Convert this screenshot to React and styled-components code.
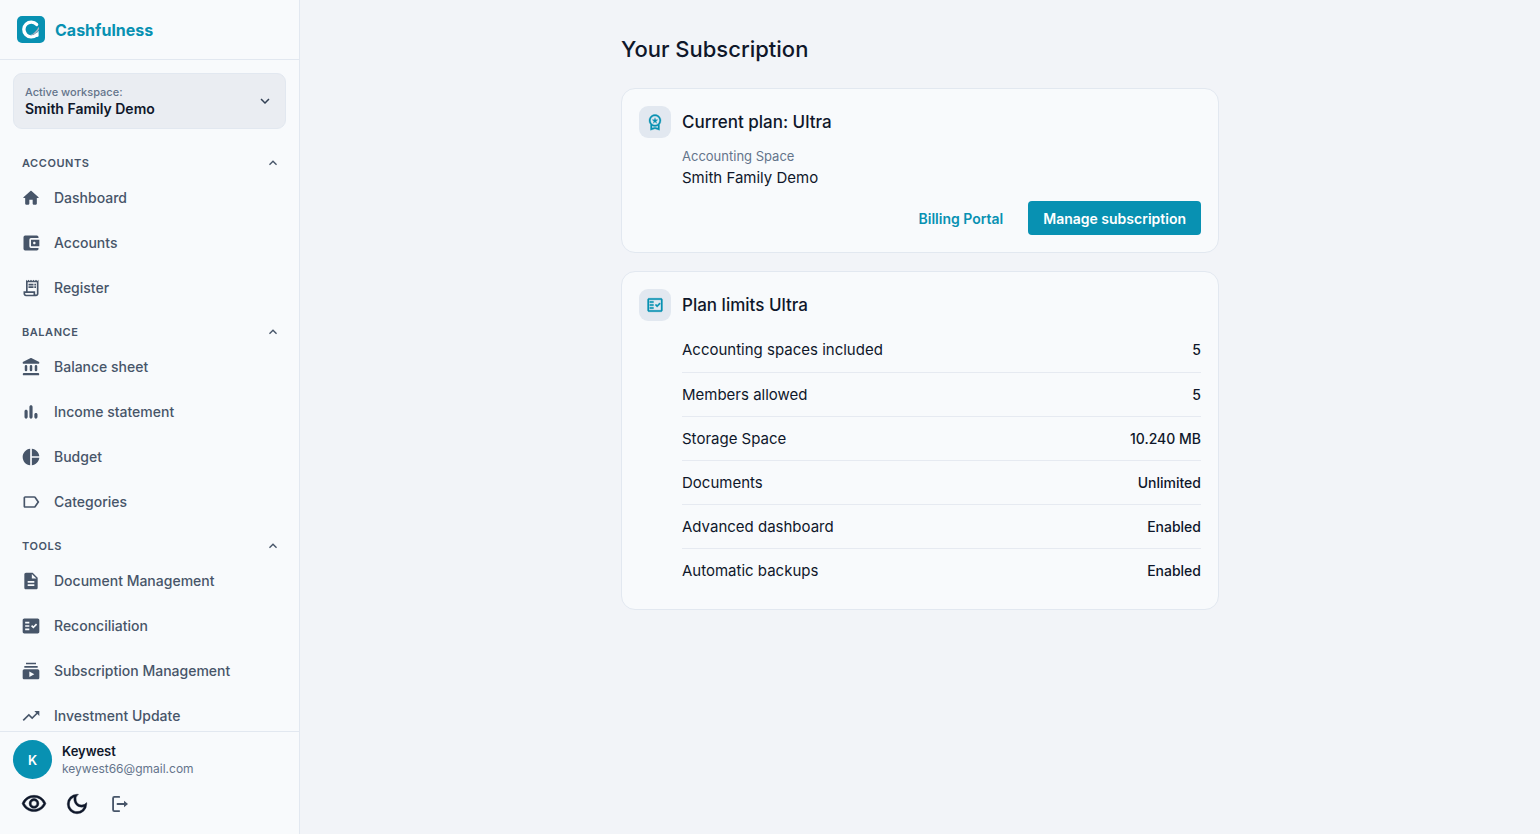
import styled, { createGlobalStyle } from "styled-components";
import { useState } from "react";
import {
  MdAccountBalanceWallet,
  MdOutlineReceiptLong,
  MdPieChart,
  MdLabelOutline,
  MdDescription,
  MdFactCheck,
  MdSubscriptions,
  MdTrendingUp,
  MdExpandMore,
  MdExpandLess,
  MdOutlineVisibility,
  MdOutlineDarkMode,
  MdOutlineWorkspacePremium,
  MdOutlineFactCheck,
} from "react-icons/md";

const GlobalStyle = createGlobalStyle`
  * {
    box-sizing: border-box;
  }

  body {
    margin: 0;
    background-color: #f2f4f8;
    color: #0f172a;
    font-family: Inter, "Liberation Sans", sans-serif;
    font-size: 15px;
  }

  button {
    font-family: inherit;
    cursor: pointer;
  }
`;

const Layout = styled.div`
  display: flex;
  height: 100vh;
`;

const Sidebar = styled.aside`
  display: flex;
  flex-direction: column;
  flex: 0 0 300px;
  background-color: #f8fafc;
  border-right: 1px solid #e2e8f0;
`;

const Brand = styled.a`
  display: flex;
  align-items: center;
  gap: 10px;
  flex-shrink: 0;
  height: 60px;
  padding: 0 17px;
  border-bottom: 1px solid #e2e8f0;
  color: #0891b2;
  font-size: 16px;
  font-weight: 700;
  text-decoration: none;
`;

const Workspace = styled.button`
  display: flex;
  justify-content: space-between;
  align-items: center;
  flex-shrink: 0;
  height: 56px;
  margin: 13px;
  padding: 0 11px;
  background-color: #eaedf2;
  border: 1px solid #e2e8f0;
  border-radius: 9px;
  color: #334155;
  text-align: left;
`;

const WorkspaceLabel = styled.span`
  display: block;
  color: #64748b;
  font-size: 11px;
  font-weight: 500;
  line-height: 16px;
`;

const WorkspaceName = styled.span`
  display: block;
  color: #0f172a;
  font-size: 14px;
  font-weight: 600;
  line-height: 18px;
`;

const Nav = styled.nav`
  flex: 1;
  min-height: 0;
  padding-top: 8px;
  overflow-y: auto;
  scrollbar-width: none;
`;

const Group = styled.section`
  margin-bottom: 9px;
`;

const GroupTitle = styled.button`
  display: flex;
  justify-content: space-between;
  align-items: center;
  width: 100%;
  height: 25px;
  padding: 0 18px 0 22px;
  background: none;
  border: none;
  color: #475569;
  font-size: 11px;
  font-weight: 600;
  letter-spacing: 0.05em;
  text-transform: uppercase;
`;

const NavItem = styled.a`
  display: flex;
  align-items: center;
  gap: 13px;
  height: 45px;
  padding: 0 21px;
  color: #475569;
  font-size: 14px;
  font-weight: 500;
  text-decoration: none;

  &:hover {
    color: #0891b2;
  }
`;

const Footer = styled.footer`
  flex-shrink: 0;
  height: 103px;
  padding: 8px 13px;
  border-top: 1px solid #e2e8f0;
`;

const User = styled.div`
  display: flex;
  align-items: center;
  gap: 10px;
`;

const Avatar = styled.div`
  display: flex;
  justify-content: center;
  align-items: center;
  width: 39px;
  height: 39px;
  background-color: #0891b2;
  border-radius: 50%;
  color: white;
  font-size: 13px;
  font-weight: 600;
`;

const UserName = styled.div`
  font-size: 13px;
  font-weight: 600;
  line-height: 18px;
`;

const UserMail = styled.div`
  color: #64748b;
  font-size: 12px;
  line-height: 18px;
`;

const Actions = styled.div`
  display: flex;
  gap: 1px;
  margin-top: 4px;
`;

const IconButton = styled.button`
  display: flex;
  justify-content: center;
  align-items: center;
  width: 42px;
  height: 42px;
  padding: 0;
  background: none;
  border: none;
  color: ${(props) => (props.$muted ? "#475569" : "#0f172a")};

  path:not([fill="none"]) {
    stroke: currentColor;
    stroke-width: ${(props) => (props.$muted ? "0" : "0.4px")};
  }
`;

const Main = styled.main`
  flex: 1;
  padding: 32px 20px;
  overflow-y: auto;
`;

const Content = styled.div`
  display: flex;
  flex-direction: column;
  gap: 18px;
  max-width: 598px;
  margin: 0 auto;
`;

const PageTitle = styled.h1`
  margin: 0 0 4px;
  font-size: 22px;
  font-weight: 500;
  line-height: 34px;
`;

const Card = styled.section`
  padding: 17px;
  background-color: #f8fafc;
  border: 1px solid #e2e8f0;
  border-radius: 14px;
`;

const CardHeader = styled.header`
  display: flex;
  align-items: center;
  gap: 11px;
`;

const CardIcon = styled.div`
  display: flex;
  justify-content: center;
  align-items: center;
  width: 32px;
  height: 32px;
  background-color: #e2e8f0;
  border-radius: 9px;
  color: #0891b2;

  path:not([fill="none"]) {
    stroke: currentColor;
    stroke-width: 0.4px;
  }
`;

const CardTitle = styled.h2`
  margin: 0;
  font-size: 17px;
  font-weight: 500;
`;

const CardBody = styled.div`
  padding: 7px 0 0 43px;
`;

const SpaceLabel = styled.div`
  color: #64748b;
  font-size: 13px;
  line-height: 22px;
`;

const SpaceName = styled.div`
  font-size: 15px;
  line-height: 22px;
`;

const CardActions = styled.div`
  display: flex;
  justify-content: flex-end;
  gap: 10px;
  margin-top: 12px;
`;

const Button = styled.button`
  height: 34px;
  padding: 0 15px;
  background-color: ${(props) => (props.$primary ? "#0891b2" : "transparent")};
  border: none;
  border-radius: 4px;
  color: ${(props) => (props.$primary ? "white" : "#0891b2")};
  font-size: 14px;
  font-weight: 600;
`;

const Limits = styled.table`
  width: 100%;
  border-collapse: collapse;

  th,
  td {
    height: 44px;
    padding: 0;
    border-bottom: 1px solid #e6eaf1;
  }

  tr:last-child th,
  tr:last-child td {
    border-bottom: none;
  }

  th {
    font-size: 15px;
    font-weight: 400;
    text-align: left;
  }

  td {
    font-size: 14px;
    font-weight: 500;
    text-align: right;
  }
`;

const Svg = ({ size = 20, children }) => (
  <svg width={size} height={size} viewBox="0 0 24 24" fill="currentColor" aria-hidden="true">
    {children}
  </svg>
);

const HomeIcon = () => (
  <Svg>
    <path d="M10 19v-5h4v5c0 .55.45 1 1 1h3c.55 0 1-.45 1-1v-7h1.7c.46 0 .68-.57.33-.87L12.67 3.6c-.38-.34-.96-.34-1.34 0l-8.36 7.53c-.34.3-.13.87.33.87H5v7c0 .55.45 1 1 1h3c.55 0 1-.45 1-1z" />
  </Svg>
);

const BankIcon = () => (
  <Svg>
    <path d="M4.5 11v4.6a1.5 1.5 0 0 0 3 0V11a1.5 1.5 0 0 0-3 0zM10.5 11v4.6a1.5 1.5 0 0 0 3 0V11a1.5 1.5 0 0 0-3 0zM16.5 11v4.6a1.5 1.5 0 0 0 3 0V11a1.5 1.5 0 0 0-3 0zM3.5 22h17a1.4 1.4 0 0 0 0-2.8h-17a1.4 1.4 0 0 0 0 2.8zM11.07 1.5 2.7 5.7C2.3 5.9 2 6.3 2 6.75c0 .7.5 1.25 1.2 1.25h17.6c.7 0 1.2-.55 1.2-1.25 0-.45-.3-.85-.7-1.05l-8.37-4.2c-.58-.3-1.28-.3-1.86 0z" />
  </Svg>
);

const BarsIcon = () => (
  <Svg>
    <path d="M6.1 9.2c1.1 0 1.9.8 1.9 1.9v7c0 1-.8 1.9-1.9 1.9s-1.9-.9-1.9-1.9v-7c0-1.1.8-1.9 1.9-1.9zM12 4c1.1 0 1.9.8 1.9 1.9v12.2c0 1-.8 1.9-1.9 1.9s-1.9-.9-1.9-1.9V5.9C10.1 4.8 10.9 4 12 4zM17.9 13.2c1.1 0 1.9.8 1.9 1.9v3c0 1-.8 1.9-1.9 1.9s-1.9-.9-1.9-1.9v-3c0-1.1.8-1.9 1.9-1.9z" />
  </Svg>
);

const LogoutIcon = () => (
  <Svg>
    <path
      d="M11 3.5H5.2c-.9 0-1.5.6-1.5 1.5v14c0 .9.6 1.5 1.5 1.5H11M9 12h10"
      fill="none"
      stroke="currentColor"
      strokeWidth="2.2"
      strokeLinecap="round"
    />
    <path d="M16.8 8 21.6 12l-4.8 4z" />
  </Svg>
);

const Logo = () => (
  <svg width="28" height="27" viewBox="0 0 28 27" aria-hidden="true">
    <rect width="28" height="27" rx="5" fill="#0891b2" />
    <path
      d="M19.6 8.4A7.4 7.4 0 1 0 19.3 18.9"
      fill="none"
      stroke="white"
      strokeWidth="3.4"
      strokeLinecap="round"
    />
    <path d="M15 19.8c2.8-.8 5-2.6 6.6-5v5.4c-2 1.3-4.5 1.2-6.6-.4z" fill="white" />
    <path d="M12.8 19.2c3.9-1.2 6.8-4.2 8.9-8.4l.4 2.2c-1.9 3.7-4.9 6.6-9.3 6.2z" fill="#a9b0bf" />
  </svg>
);

const groups = [
  {
    title: "Accounts",
    items: [
      { name: "Dashboard", Icon: HomeIcon },
      { name: "Accounts", Icon: MdAccountBalanceWallet },
      { name: "Register", Icon: MdOutlineReceiptLong },
    ],
  },
  {
    title: "Balance",
    items: [
      { name: "Balance sheet", Icon: BankIcon },
      { name: "Income statement", Icon: BarsIcon },
      { name: "Budget", Icon: MdPieChart },
      { name: "Categories", Icon: MdLabelOutline },
    ],
  },
  {
    title: "Tools",
    items: [
      { name: "Document Management", Icon: MdDescription },
      { name: "Reconciliation", Icon: MdFactCheck },
      { name: "Subscription Management", Icon: MdSubscriptions },
      { name: "Investment Update", Icon: MdTrendingUp },
    ],
  },
];

const limits = [
  ["Accounting spaces included", "5"],
  ["Members allowed", "5"],
  ["Storage Space", "10.240 MB"],
  ["Documents", "Unlimited"],
  ["Advanced dashboard", "Enabled"],
  ["Automatic backups", "Enabled"],
];

function NavGroup(props) {
  const [open, setOpen] = useState(true);

  return (
    <Group>
      <GroupTitle aria-expanded={open} onClick={() => setOpen(!open)}>
        {props.group.title}
        {open ? <MdExpandLess size={16} /> : <MdExpandMore size={16} />}
      </GroupTitle>
      {open &&
        props.group.items.map(({ name, Icon }) => (
          <NavItem key={name} href="#">
            <Icon size={20} />
            {name}
          </NavItem>
        ))}
    </Group>
  );
}

function App() {
  return (
    <Layout>
      <GlobalStyle />
      <Sidebar>
        <Brand href="#">
          <Logo />
          Cashfulness
        </Brand>
        <Workspace>
          <span>
            <WorkspaceLabel>Active workspace:</WorkspaceLabel>
            <WorkspaceName>Smith Family Demo</WorkspaceName>
          </span>
          <MdExpandMore size={18} />
        </Workspace>
        <Nav>
          {groups.map((group) => (
            <NavGroup key={group.title} group={group} />
          ))}
        </Nav>
        <Footer>
          <User>
            <Avatar>K</Avatar>
            <div>
              <UserName>Keywest</UserName>
              <UserMail>keywest66@gmail.com</UserMail>
            </div>
          </User>
          <Actions>
            <IconButton aria-label="Show amounts">
              <MdOutlineVisibility size={26} />
            </IconButton>
            <IconButton aria-label="Dark mode">
              <MdOutlineDarkMode size={26} />
            </IconButton>
            <IconButton aria-label="Log out" $muted>
              <LogoutIcon />
            </IconButton>
          </Actions>
        </Footer>
      </Sidebar>
      <Main>
        <Content>
          <PageTitle>Your Subscription</PageTitle>
          <Card>
            <CardHeader>
              <CardIcon>
                <MdOutlineWorkspacePremium size={18} />
              </CardIcon>
              <CardTitle>Current plan: Ultra</CardTitle>
            </CardHeader>
            <CardBody>
              <SpaceLabel>Accounting Space</SpaceLabel>
              <SpaceName>Smith Family Demo</SpaceName>
              <CardActions>
                <Button>Billing Portal</Button>
                <Button $primary>Manage subscription</Button>
              </CardActions>
            </CardBody>
          </Card>
          <Card>
            <CardHeader>
              <CardIcon>
                <MdOutlineFactCheck size={18} />
              </CardIcon>
              <CardTitle>Plan limits Ultra</CardTitle>
            </CardHeader>
            <CardBody>
              <Limits>
                <tbody>
                  {limits.map(([name, value]) => (
                    <tr key={name}>
                      <th scope="row">{name}</th>
                      <td>{value}</td>
                    </tr>
                  ))}
                </tbody>
              </Limits>
            </CardBody>
          </Card>
        </Content>
      </Main>
    </Layout>
  );
}

export default App;
